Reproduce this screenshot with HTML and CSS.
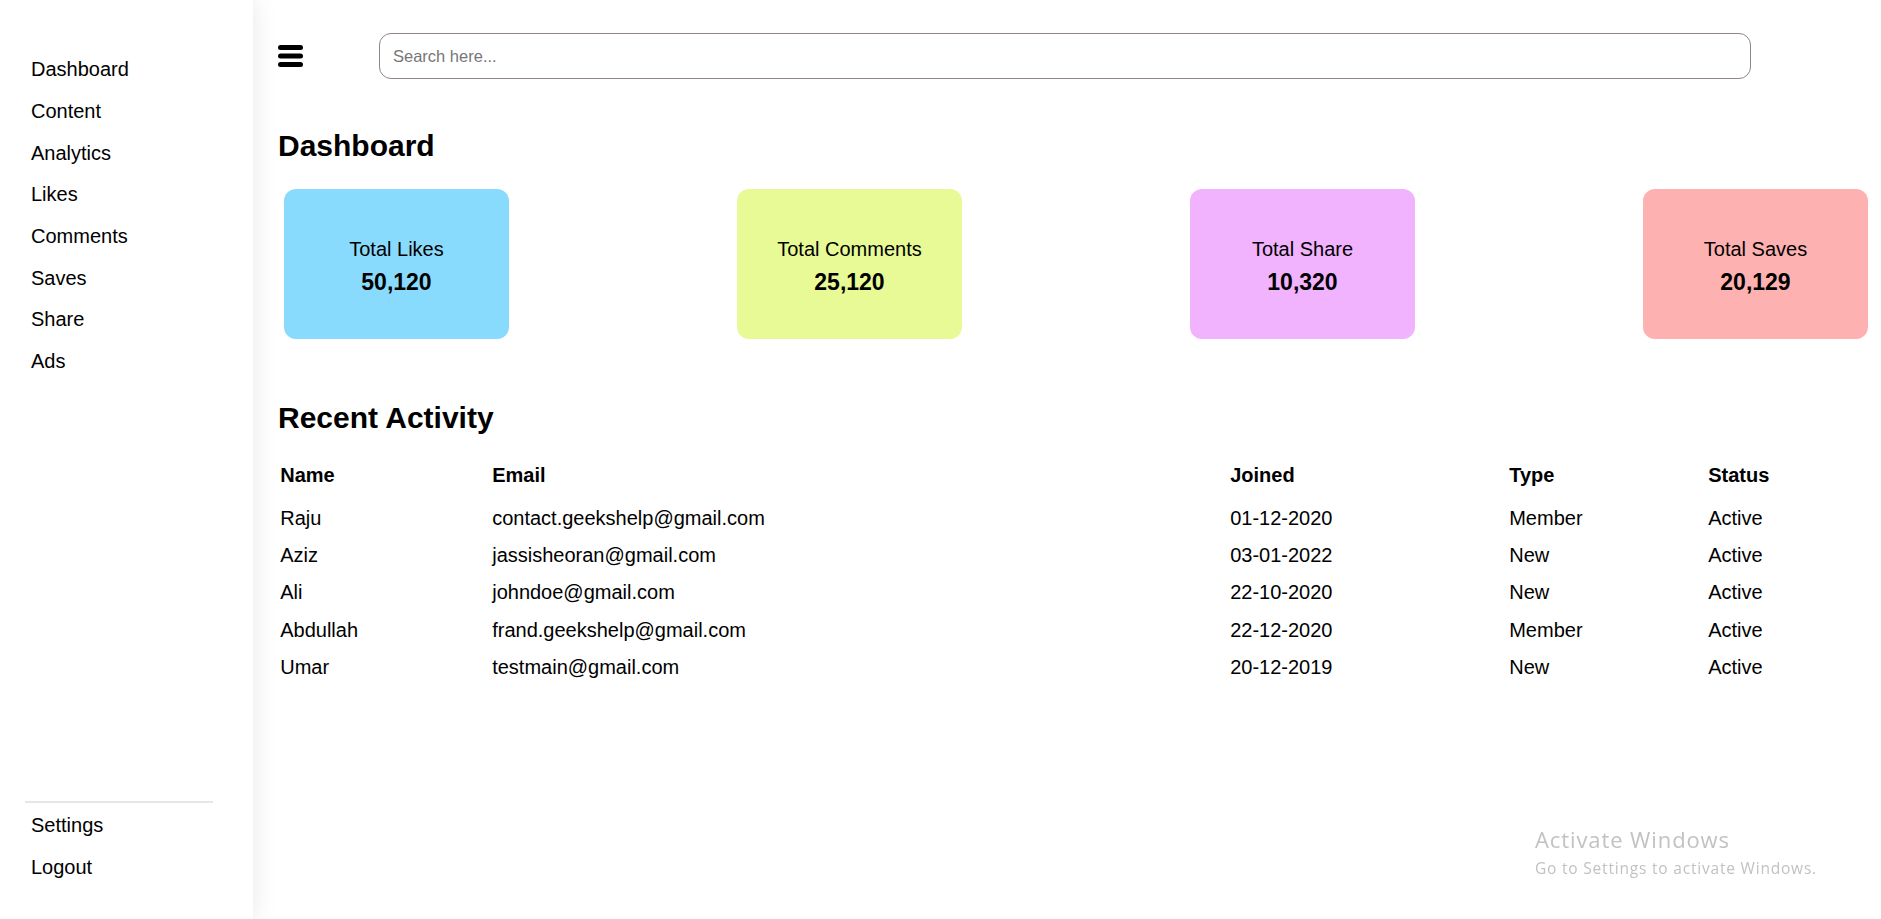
FILE: index.html
```html
<!DOCTYPE html>
<html lang="en">
<head>
<meta charset="utf-8">
<title>Dashboard</title>
<link rel="stylesheet" href="styles.css">
</head>
<body>
<div class="layout">
  <aside class="sidebar">
    <ul class="nav">
      <li>Dashboard</li>
      <li>Content</li>
      <li>Analytics</li>
      <li>Likes</li>
      <li>Comments</li>
      <li>Saves</li>
      <li>Share</li>
      <li>Ads</li>
    </ul>
    <ul class="nav nav-bottom">
      <li>Settings</li>
      <li>Logout</li>
    </ul>
  </aside>
  <main class="main">
    <header class="topbar">
      <span class="menu-btn">
        <svg width="25" height="22" viewBox="0 0 25 22"><rect x="0" y="0" width="25" height="5" rx="2.5"/><rect x="0" y="8.5" width="25" height="5" rx="2.5"/><rect x="0" y="17" width="25" height="5" rx="2.5"/></svg>
      </span>
      <input class="search" type="text" placeholder="Search here...">
    </header>
    <h1 class="page-title">Dashboard</h1>
    <div class="cards">
      <div class="card card-likes"><span class="card-label">Total Likes</span><span class="card-value">50,120</span></div>
      <div class="card card-comments"><span class="card-label">Total Comments</span><span class="card-value">25,120</span></div>
      <div class="card card-share"><span class="card-label">Total Share</span><span class="card-value">10,320</span></div>
      <div class="card card-saves"><span class="card-label">Total Saves</span><span class="card-value">20,129</span></div>
    </div>
    <h2 class="section-title">Recent Activity</h2>
    <table class="activity">
      <colgroup>
        <col class="col-name"><col class="col-email"><col class="col-joined"><col class="col-type"><col>
      </colgroup>
      <thead>
        <tr><th>Name</th><th>Email</th><th>Joined</th><th>Type</th><th>Status</th></tr>
      </thead>
      <tbody>
        <tr><td>Raju</td><td>contact.geekshelp@gmail.com</td><td>01-12-2020</td><td>Member</td><td>Active</td></tr>
        <tr><td>Aziz</td><td>jassisheoran@gmail.com</td><td>03-01-2022</td><td>New</td><td>Active</td></tr>
        <tr><td>Ali</td><td>johndoe@gmail.com</td><td>22-10-2020</td><td>New</td><td>Active</td></tr>
        <tr><td>Abdullah</td><td>frand.geekshelp@gmail.com</td><td>22-12-2020</td><td>Member</td><td>Active</td></tr>
        <tr><td>Umar</td><td>testmain@gmail.com</td><td>20-12-2019</td><td>New</td><td>Active</td></tr>
      </tbody>
    </table>
  </main>
</div>
<div class="watermark">
  <div class="wm-title">Activate Windows</div>
  <div class="wm-sub">Go to Settings to activate Windows.</div>
</div>
</body>
</html>
```

FILE: styles.css
```css
html, body {
  margin: 0;
  padding: 0;
  background: #fff;
}
body {
  font-family: "Liberation Sans", Arial, sans-serif;
  color: #000;
  overflow: hidden;
}
.layout {
  display: flex;
  height: 100vh;
}
.sidebar {
  width: 253px;
  flex-shrink: 0;
  box-sizing: border-box;
  display: flex;
  flex-direction: column;
  justify-content: space-between;
  padding: 49px 0 31px;
  background: #fff;
  box-shadow: 0 0 22px rgba(90, 60, 60, 0.13);
  position: relative;
  z-index: 1;
}
.nav {
  list-style: none;
  margin: 0 0 0 25px;
  padding: 0;
  width: 188px;
}
.nav li {
  font-size: 20px;
  line-height: 23px;
  padding: 9.35px 6px;
}
.nav-bottom {
  border-top: 2px solid #e6e6e6;
  padding-top: 2px;
}
.main {
  flex: 1;
  min-width: 0;
  padding: 33px 7px 0 25px;
}
.topbar {
  display: flex;
  align-items: center;
  gap: 76px;
  height: 46px;
}
.menu-btn {
  display: flex;
  width: 25px;
  height: 22px;
}
.menu-btn svg {
  fill: #000;
}
.search {
  width: 1372px;
  height: 46px;
  box-sizing: border-box;
  border: 1px solid #928585;
  border-radius: 12px;
  padding: 0 13px;
  font-family: "Liberation Sans", Arial, sans-serif;
  font-size: 16.5px;
  outline: none;
  background: #fff;
}
.search::placeholder {
  color: #767676;
}
.page-title {
  margin: 50px 0 26px;
  font-size: 30px;
  line-height: 34px;
  font-weight: bold;
}
.cards {
  display: flex;
  justify-content: space-between;
  padding: 0 6px;
}
.card {
  width: 225px;
  height: 150px;
  box-sizing: border-box;
  border-radius: 12px;
  display: flex;
  flex-direction: column;
  align-items: center;
  justify-content: center;
  gap: 8px;
  padding-top: 5px;
}
.card-likes { background: #89dbfd; }
.card-comments { background: #e7fa95; }
.card-share { background: #f1b2fe; }
.card-saves { background: #feb1b1; }
.card-label {
  font-size: 20px;
  line-height: 23px;
}
.card-value {
  font-size: 23px;
  line-height: 26px;
  font-weight: bold;
}
.section-title {
  margin: 62px 0 29px;
  font-size: 30px;
  line-height: 34px;
  font-weight: bold;
}
.activity {
  width: 100%;
  table-layout: fixed;
  border-collapse: collapse;
  border-spacing: 0;
}
.col-name { width: 212px; }
.col-email { width: 738px; }
.col-joined { width: 279px; }
.col-type { width: 199px; }
.activity th {
  text-align: left;
  font-size: 20px;
  line-height: 23px;
  font-weight: bold;
  padding: 0 0 13px 2.2px;
}
.activity td {
  font-size: 20px;
  line-height: 23px;
  padding: 7.1px 0 7.1px 2.2px;
}
.watermark {
  position: fixed;
  left: 1535px;
  top: 824px;
  font-family: "Open Sans", "Noto Sans", sans-serif;
  color: #c2c2c2;
  pointer-events: none;
}
.wm-title {
  font-size: 22px;
  line-height: 30px;
  letter-spacing: 0.9px;
}
.wm-sub {
  margin-top: 3.5px;
  font-size: 15.5px;
  line-height: 21px;
  letter-spacing: 0.8px;
}
```
